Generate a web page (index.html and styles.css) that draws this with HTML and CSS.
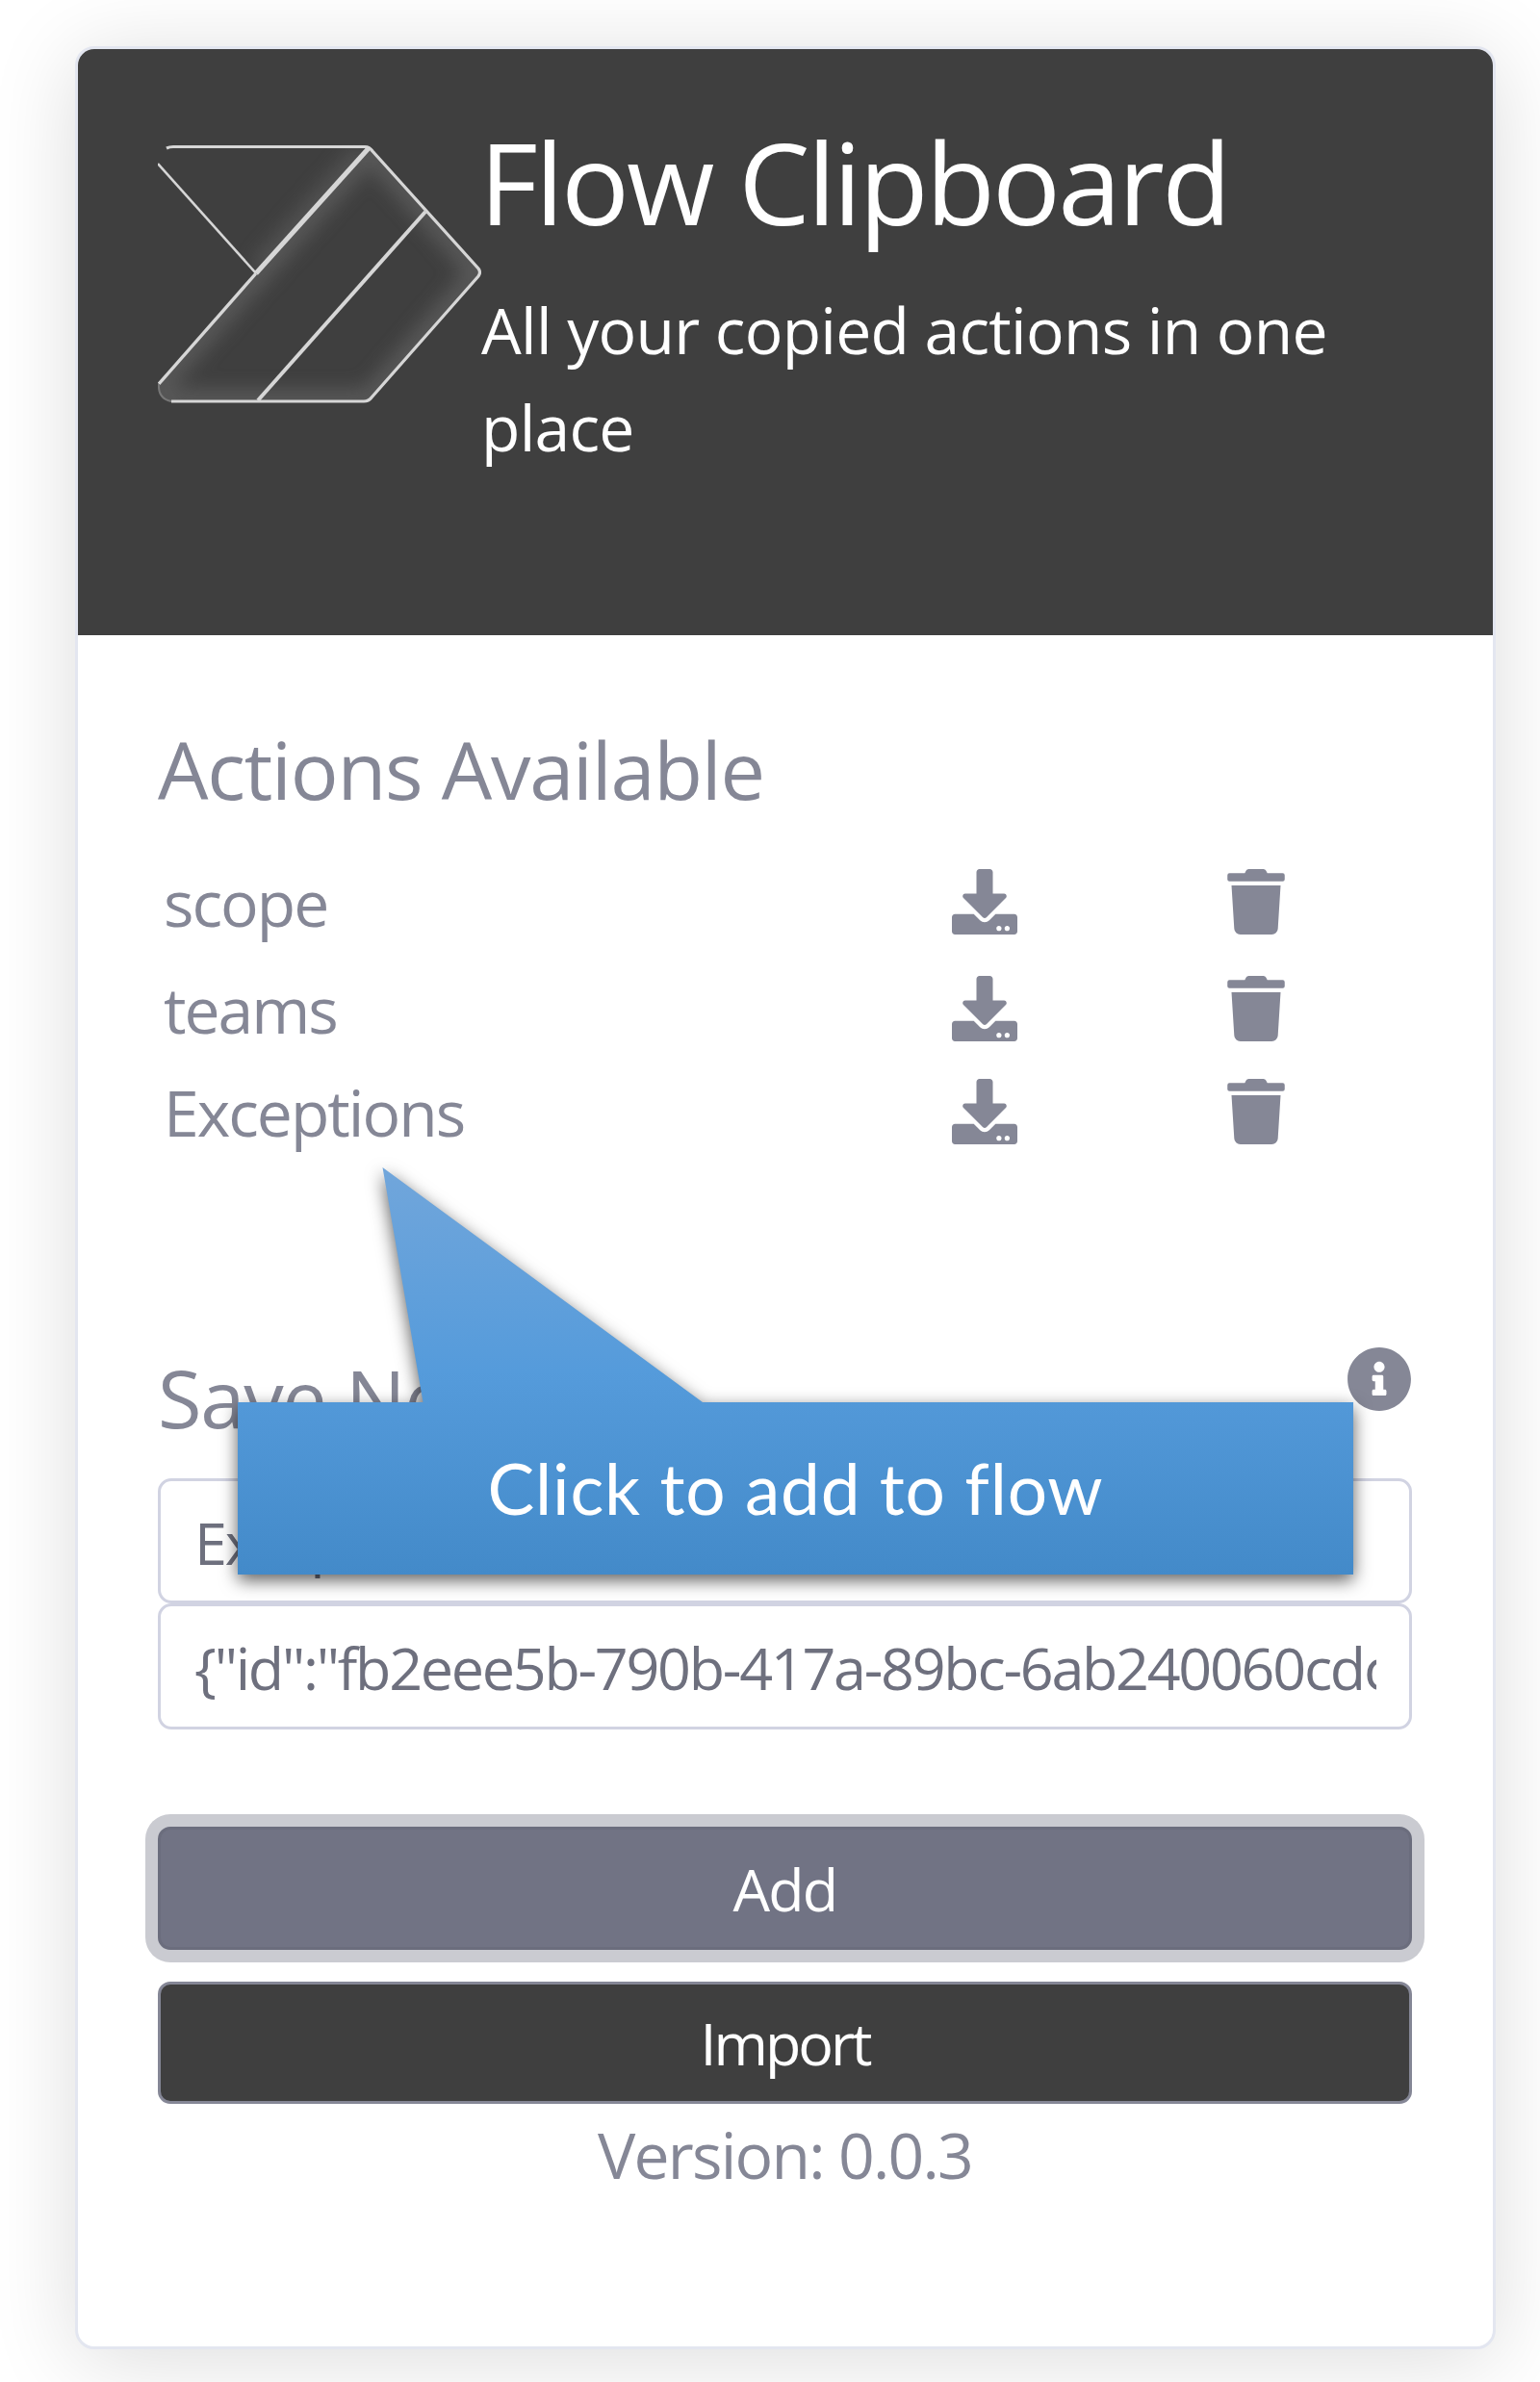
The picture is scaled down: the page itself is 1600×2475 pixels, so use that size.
FILE: index.html
```html
<!DOCTYPE html>
<html lang="en">
<head>
<meta charset="utf-8">
<title>Flow Clipboard</title>
<link rel="stylesheet" href="styles.css">
</head>
<body>
<svg class="sprite" aria-hidden="true">
  <symbol id="download" viewBox="0 0 512 512"><path d="M216 0h80c13.3 0 24 10.7 24 24v168h87.7c17.8 0 26.7 21.5 14.1 34.1L269.7 378.3c-7.5 7.5-19.8 7.5-27.3 0L90.1 226.1c-12.6-12.6-3.7-34.1 14.1-34.1H192V24c0-13.3 10.7-24 24-24zm296 376v112c0 13.3-10.7 24-24 24H24c-13.3 0-24-10.7-24-24V376c0-13.3 10.7-24 24-24h146.7l49 49c20.1 20.1 52.5 20.1 72.6 0l49-49H488c13.3 0 24 10.7 24 24zm-124 88c0-11-9-20-20-20s-20 9-20 20 9 20 20 20 20-9 20-20zm64 0c0-11-9-20-20-20s-20 9-20 20 9 20 20 20 20-9 20-20z"/></symbol>
  <symbol id="trash" viewBox="0 0 448 512"><path d="M432 32H312l-9.4-18.7A24 24 0 0 0 281.1 0H166.8a23.72 23.72 0 0 0-21.4 13.3L136 32H16A16 16 0 0 0 0 48v32a16 16 0 0 0 16 16h416a16 16 0 0 0 16-16V48a16 16 0 0 0-16-16zM53.2 467a48 48 0 0 0 47.9 45h245.8a48 48 0 0 0 47.9-45L416 128H32z"/></symbol>
</svg>
<main class="card">
  <header class="card-header">
    <svg class="logo" viewBox="0 0 336 270">
      <defs>
        <clipPath id="band"><path d="M220 4L335 130V136L220 267H12Q2 266 0 250Z"/></clipPath>
        <clipPath id="fold"><path d="M0 0H220L102 134Z"/></clipPath>
        <filter id="glow" x="-20%" y="-20%" width="140%" height="140%"><feGaussianBlur stdDeviation="10"/></filter>
      </defs>
      <g clip-path="url(#band)"><path class="logo-glow" filter="url(#glow)" d="M220 4L335 133L220 267H8L0 250Z"/></g>
      <g clip-path="url(#fold)"><path class="logo-glow faint" filter="url(#glow)" d="M216 8L106 132"/></g>
      <g class="logo-lines">
        <path d="M9 4Q12 2.500 16 2.500H215Q220 2.500 223 7L333 129Q336 133 333 137L222 263Q219 267 214 267H14" stroke-width="3.200"/>
        <path d="M0 20L102 134" stroke-width="2.600"/>
        <path d="M219 4L102 134" stroke-width="5"/>
        <path d="M102 134L1 249" stroke-width="3.400"/>
        <path class="logo-corner" d="M1 249Q0 264 14 267" stroke-width="2"/>
        <path d="M278 70L104 266" stroke-width="4"/>
      </g>
    </svg>
    <div class="heading">
      <h1 class="title">Flow Clipboard</h1>
      <p class="subtitle">All your copied actions in one place</p>
    </div>
  </header>
  <section class="card-body">
    <h2 class="section-title actions-title">Actions Available</h2>
    <div class="actions">
      <span>scope</span><svg class="icon"><use href="#download"/></svg><svg class="icon trash"><use href="#trash"/></svg>
      <span>teams</span><svg class="icon"><use href="#download"/></svg><svg class="icon trash"><use href="#trash"/></svg>
      <span>Exceptions</span><svg class="icon"><use href="#download"/></svg><svg class="icon trash"><use href="#trash"/></svg>
    </div>
    <div class="save-row">
      <h2 class="section-title">Save New</h2>
      <svg class="icon info" viewBox="0 0 512 512"><path d="M256 8C119.043 8 8 119.083 8 256c0 136.997 111.043 248 248 248s248-111.003 248-248C504 119.083 392.957 8 256 8zm0 110c23.196 0 42 18.804 42 42s-18.804 42-42 42-42-18.804-42-42 18.804-42 42-42zm56 254c0 6.627-5.373 12-12 12h-88c-6.627 0-12-5.373-12-12v-24c0-6.627 5.373-12 12-12h12v-64h-12c-6.627 0-12-5.373-12-12v-24c0-6.627 5.373-12 12-12h64c6.627 0 12 5.373 12 12v100h12c6.627 0 12 5.373 12 12v24z"/></svg>
    </div>
    <input class="field" type="text" value="Exceptions">
    <input class="field field-json" type="text" value="{&quot;id&quot;:&quot;fb2eee5b-790b-417a-89bc-6ab240060cdc">
    <button class="btn btn-add">Add</button>
    <button class="btn btn-import">Import</button>
    <p class="version">Version: 0.0.3</p>
  </section>
</main>
<aside class="callout">
  <svg class="callout-shape" viewBox="0 0 1159 423">
    <defs><linearGradient id="blue" x1="0" y1="0" x2="0" y2="1"><stop offset="0" stop-color="#71a6db"/><stop offset=".5" stop-color="#559bdb"/><stop offset="1" stop-color="#438ac9"/></linearGradient></defs>
    <path fill="url(#blue)" d="M150.500 0L483 244H1159V423H0V244H192.500Z"/>
  </svg>
  <p class="callout-text">Click to add to flow</p>
</aside>
</body>
</html>
```
FILE: styles.css
```css
* { box-sizing: border-box; }

body {
  margin: 0;
  height: 2475px;
  overflow: hidden;
  position: relative;
  padding: 48px 0 0 78px;
  background: #fff;
  color: #858796;
  font-family: "Open Sans", "Noto Sans", sans-serif;
  font-size: 66px;
}

h1, h2, p { margin: 0; font-weight: 400; }

.sprite { display: none; }

.card {
  width: 1476px;
  height: 2393px;
  border: 3px solid #e3e6f0;
  border-radius: 20px;
  background: #fff;
  box-shadow: 0 10px 90px rgba(0, 0, 0, .14);
}

.card-header {
  display: flex;
  height: 609px;
  padding: 68px 83px 0;
  border-radius: 17px 17px 0 0;
  background: #3f3f3f;
  color: #fff;
}

.logo { flex: none; width: 336px; height: 270px; margin-top: 31px; }
.logo-glow { fill: none; stroke: #777; stroke-width: 26; opacity: .45; }
.faint { opacity: .35; }
.logo-lines { fill: none; stroke: #d6d6d6; }
.logo-corner { stroke: #777; }

.title {
  margin: 0 0 33px -2px;
  font-size: 118px;
  line-height: 140px;
  letter-spacing: -2.9px;
  white-space: nowrap;
}

.subtitle { width: 900px; line-height: 101px; letter-spacing: -.75px; }

.card-body { padding: 89px 84px 0 83px; }

.section-title { font-size: 83px; line-height: 100px; letter-spacing: -1.25px; }

.actions {
  display: grid;
  grid-template-columns: 819px 286px 1fr;
  grid-template-rows: 111px 111px 103px;
  align-items: center;
  margin: 32px 0 0;
  padding-left: 6px;
  letter-spacing: -2px;
}

.icon { width: 68px; height: 68px; fill: #858796; }
.trash { width: 60px; }
.info { margin-top: -3px; }

.save-row {
  display: flex;
  justify-content: space-between;
  margin: 196px 0 34px;
}

.field {
  display: block;
  width: 100%;
  height: 130px;
  padding: 2px 34px 0 35px;
  border: 3px solid #d1d3e2;
  border-radius: 14px;
  background: #fff;
  color: #6e707e;
  font: inherit;
  font-size: 61px;
  letter-spacing: -2.25px;
}

.field-json { height: 131px; }

.btn {
  display: block;
  width: 100%;
  padding: 0;
  border: 3px solid #858796;
  border-radius: 13px;
  color: #fff;
  font: inherit;
  font-size: 61px;
  letter-spacing: -1.8px;
}

.btn-add {
  height: 128px;
  margin-top: 101px;
  border-color: #6b6d7d;
  background: #717384;
  box-shadow: 0 0 0 13px #cacbd1;
}

.btn-import {
  height: 127px;
  margin-top: 33px;
  background: #3f3f3f;
  letter-spacing: -3px;
}

.version {
  margin-top: 2px;
  line-height: 101px;
  letter-spacing: -1.8px;
  text-align: center;
}

/* Annotation balloon lying over the card */
.callout {
  position: absolute;
  left: 247px;
  top: 1213px;
  width: 1159px;
  height: 423px;
}

.callout-shape {
  display: block;
  width: 100%;
  height: 100%;
  overflow: visible;
  filter: drop-shadow(0 6px 9px rgba(0, 0, 0, .63));
}

.callout-text {
  position: absolute;
  inset: 244px 0 0;
  color: #fff;
  font: 73px/179px Lato, sans-serif;
  letter-spacing: .8px;
  text-align: center;
}
```
